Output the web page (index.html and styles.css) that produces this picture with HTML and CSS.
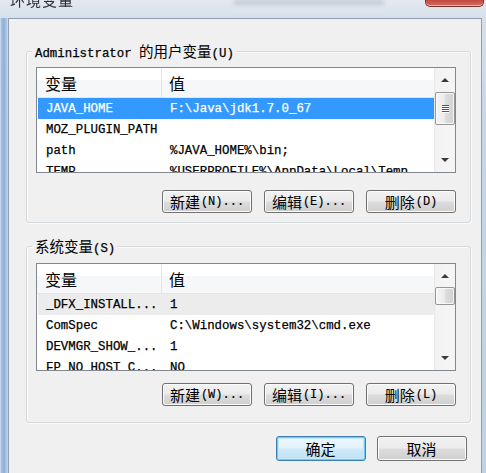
FILE: index.html
```html
<!DOCTYPE html>
<html lang="zh-CN">
<head>
<meta charset="utf-8">
<title>环境变量</title>
<link rel="stylesheet" href="styles.css">
</head>
<body>
<div class="window">
  <div class="titlebar">
    <span class="title">环境变量</span>
    <span class="glare"></span>
    <span class="close"></span>
  </div>
  <div class="frame">
    <div class="client">
      <section class="group group-user">
        <div class="legend">Administrator <span class="cjk">的用户变量</span>(U)</div>
        <div class="listview lv-user">
          <div class="lv-body">
            <div class="lv-header"><div class="c1">变量</div><div class="c2">值</div></div>
            <div class="row selected"><div class="c1">JAVA_HOME</div><div class="c2">F:\Java\jdk1.7.0_67</div></div>
            <div class="row"><div class="c1">MOZ_PLUGIN_PATH</div><div class="c2"></div></div>
            <div class="row"><div class="c1">path</div><div class="c2">%JAVA_HOME%\bin;</div></div>
            <div class="row"><div class="c1">TEMP</div><div class="c2">%USERPROFILE%\AppData\Local\Temp</div></div>
          </div>
          <div class="scrollbar">
            <div class="sb-btn up"></div>
            <div class="sb-track"><div class="thumb thumb-user"><span class="grip"></span></div></div>
            <div class="sb-btn down"></div>
          </div>
        </div>
        <div class="btn-row">
          <button class="btn"><span class="cjk">新建</span>(N)...</button>
          <button class="btn"><span class="cjk">编辑</span>(E)...</button>
          <button class="btn"><span class="cjk">删除</span>(D)</button>
        </div>
      </section>

      <section class="group group-system">
        <div class="legend"><span class="cjk">系统变量</span>(S)</div>
        <div class="listview lv-system">
          <div class="lv-body">
            <div class="lv-header"><div class="c1">变量</div><div class="c2">值</div></div>
            <div class="row inactive"><div class="c1">_DFX_INSTALL...</div><div class="c2">1</div></div>
            <div class="row"><div class="c1">ComSpec</div><div class="c2">C:\Windows\system32\cmd.exe</div></div>
            <div class="row"><div class="c1">DEVMGR_SHOW_...</div><div class="c2">1</div></div>
            <div class="row"><div class="c1">FP_NO_HOST_C...</div><div class="c2">NO</div></div>
          </div>
          <div class="scrollbar">
            <div class="sb-btn up"></div>
            <div class="sb-track"><div class="thumb thumb-system"></div></div>
            <div class="sb-btn down"></div>
          </div>
        </div>
        <div class="btn-row">
          <button class="btn"><span class="cjk">新建</span>(W)...</button>
          <button class="btn"><span class="cjk">编辑</span>(I)...</button>
          <button class="btn"><span class="cjk">删除</span>(L)</button>
        </div>
      </section>

      <div class="dialog-buttons">
        <button class="btn btn-dlg default"><span class="cjk">确定</span></button>
        <button class="btn btn-dlg"><span class="cjk">取消</span></button>
      </div>
    </div>
  </div>
</div>
</body>
</html>
```

FILE: styles.css
```css
* { box-sizing: border-box; }

body {
  margin: 0;
  width: 486px;
  height: 473px;
  overflow: hidden;
  font-family: "Liberation Mono", "Noto Sans CJK SC", monospace;
  font-size: 12.4px;
  color: #000;
  background: #c4d5e8;
  -webkit-text-stroke: 0.25px currentColor;
}

.cjk {
  font-family: "Noto Sans CJK SC", sans-serif;
  -webkit-text-stroke: 0;
}

.window {
  height: 473px;
  display: flex;
  flex-direction: column;
  background: linear-gradient(to bottom, #e4e9ef 0, #d6e0ea 18px, #c6d7ea 120px, #bdd1e8 100%);
}

/* ---------- title bar ---------- */
.titlebar {
  flex: none;
  height: 18px;
  display: flex;
  align-items: flex-start;
  padding-left: 10px;
  overflow: hidden;
  -webkit-text-stroke: 0;
}

.title {
  font-family: "Noto Sans CJK SC", sans-serif;
  font-size: 15px;
  line-height: 15px;
  margin-top: -8px;
  color: #2b3038;
  letter-spacing: 1px;
  filter: blur(0.7px);
}

.glare {
  width: 150px;
  height: 5px;
  margin: 0 0 0 160px;
  background: #a9b2bd;
  opacity: 0.55;
  filter: blur(2px);
}

.close {
  margin-left: auto;
  margin-right: 2px;
  width: 59px;
  height: 7px;
  border: 1px solid #7a3530;
  border-top: none;
  border-radius: 0 0 5px 5px;
  background: linear-gradient(#c24a41, #d26a60);
  box-shadow: inset 0 -1px 0 #efb2aa;
}

/* ---------- frame / client ---------- */
.frame {
  flex: 1;
  display: flex;
  padding: 0 4px 0 8px;
  background: linear-gradient(to right, #dce7f3 0, #aac3e0 1px, #8eaed6 4px, #b7cce4 7px, transparent 8px);
}

.client {
  flex: 1;
  display: flex;
  flex-direction: column;
  background: #f0f0f0;
  border: 1px solid #8f9fb3;
  border-bottom: none;
  padding: 0 10px 0 17px;
}

/* ---------- group boxes ---------- */
.group {
  border: 1px solid #d5dadf;
  border-radius: 3px;
  box-shadow: 1px 1px 0 #fbfbfb, inset 1px 1px 0 #fbfbfb;
}

.group-user { margin-top: 32px; padding-bottom: 9px; }
.group-system { margin-top: 23px; padding-bottom: 16px; }

.legend {
  width: max-content;
  height: 16px;
  line-height: 16px;
  margin: -9px 0 0 5px;
  padding: 0 3px;
  background: #f0f0f0;
  white-space: nowrap;
}

.legend .cjk { font-size: 14.5px; }

/* ---------- list views ---------- */
.listview {
  width: 420px;
  margin: 8px 0 0 9px;
  border: 1px solid #828790;
  background: #fff;
  display: flex;
  overflow: hidden;
}

.lv-user { height: 106px; }
.lv-system { height: 108px; margin-top: 9px; }

.lv-body {
  flex: 1;
  min-width: 0;
  overflow: hidden;
}

.lv-header {
  display: flex;
  height: 30px;
  border-bottom: 1px solid #e3e5e8;
  background: linear-gradient(#ffffff 0, #ffffff 42%, #f6f7f9 42%, #f6f7f9 100%);
  font-family: "Noto Sans CJK SC", sans-serif;
  font-size: 16px;
  -webkit-text-stroke: 0;
}

.lv-header .c1 {
  width: 125px;
  padding-left: 8px;
  border-right: 1px solid #e4e4e4;
  display: flex;
  align-items: center;
}

.lv-header .c2 {
  padding-left: 7px;
  display: flex;
  align-items: center;
}

.row {
  display: flex;
  height: 21px;
  align-items: center;
  margin-left: 1px;
  white-space: nowrap;
}

.row .c1 {
  flex: none;
  width: 124px;
  padding-left: 8px;
  overflow: hidden;
}

.row .c2 {
  padding-left: 8px;
}

.row.selected {
  background: #3399ff;
  color: #fff;
}

.row.inactive {
  background: #ececec;
}

/* ---------- scrollbars ---------- */
.scrollbar {
  flex: none;
  width: 21px;
  display: flex;
  flex-direction: column;
  background: linear-gradient(to right, #e6e6e6 0, #f3f3f3 2px, #f5f5f5 100%);
}

.sb-btn {
  flex: none;
  height: 22px;
  display: flex;
  align-items: center;
  justify-content: center;
}

.sb-btn.up::before,
.sb-btn.down::before {
  content: "";
  width: 0;
  height: 0;
  border-left: 4px solid transparent;
  border-right: 4px solid transparent;
}

.sb-btn.up::before { border-bottom: 4px solid #3b3b3b; margin-top: 2px; }
.sb-btn.down::before { border-top: 4px solid #3b3b3b; margin-top: -2px; }

.sb-track {
  flex: 1;
  display: flex;
  flex-direction: column;
}

.thumb {
  margin: 0 0 0 1px;
  border: 1px solid #979797;
  border-radius: 2px;
  background: linear-gradient(to right, #f4f4f4 0, #ececec 45%, #dcdcdc 55%, #d2d2d2 100%);
  box-shadow: inset 0 0 0 1px rgba(255, 255, 255, 0.75);
  display: flex;
  align-items: center;
  justify-content: center;
}

.thumb-user { margin-top: 2px; height: 33px; }
.thumb-system { margin-top: 1px; height: 18px; }

.grip {
  width: 7px;
  height: 8px;
  background: repeating-linear-gradient(#555 0, #555 1px, #fff 1px, #fff 2px);
}

/* ---------- buttons ---------- */
.btn-row {
  display: flex;
  justify-content: flex-end;
  gap: 12px;
  padding-right: 14px;
}

.group-user .btn-row { margin-top: 17px; }
.group-system .btn-row { margin-top: 12px; }

.btn {
  width: 90px;
  height: 23px;
  padding: 0;
  border: 1px solid #707070;
  border-radius: 3px;
  background: linear-gradient(#f2f2f2 0, #ebebeb 48%, #dddddd 52%, #cfcfcf 100%);
  box-shadow: inset 0 0 0 1px #fbfbfb;
  font-family: "Liberation Mono", monospace;
  font-size: 12px;
  color: #000;
  display: flex;
  align-items: center;
  justify-content: center;
  white-space: nowrap;
  -webkit-text-stroke: 0.15px currentColor;
}

.btn .cjk { font-size: 15px; margin-right: 1px; }

.dialog-buttons {
  display: flex;
  justify-content: flex-end;
  gap: 11px;
  margin-top: 13px;
  padding-right: 4px;
}

.btn-dlg { height: 25px; }

.btn.default {
  border-color: #3c7fb1;
  box-shadow: inset 0 0 0 1px #6fcaf3, inset 0 0 0 2px #c4e9fa;
  background: linear-gradient(#eef7fc 0, #e3f2fb 48%, #cfe9f8 52%, #bfe0f4 100%);
}
```
